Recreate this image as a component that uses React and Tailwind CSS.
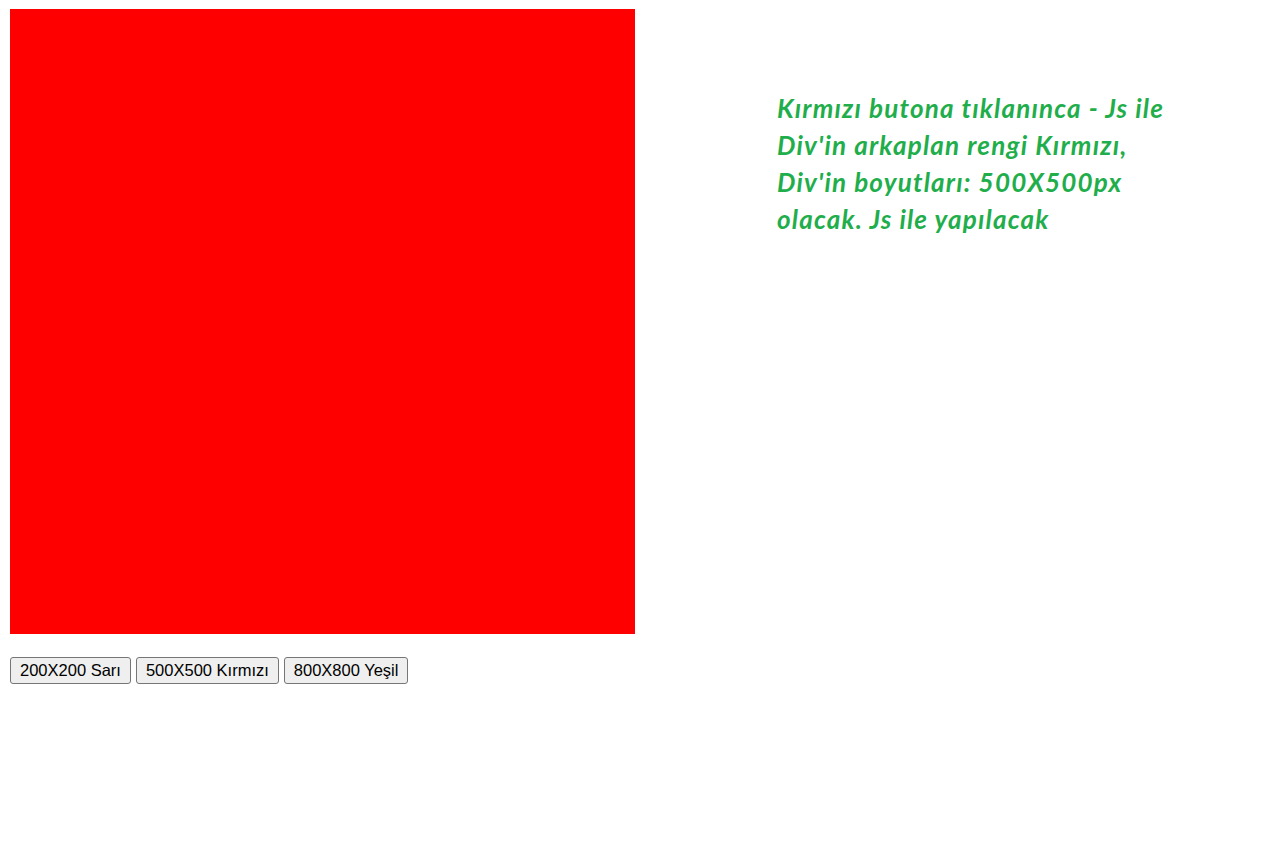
export default function App() {
  const buttons = ["200X200 Sarı", "500X500 Kırmızı", "800X800 Yeşil"];

  return (
    <div className="min-h-screen bg-white pl-[10px] pt-[9px]">
      <div className="flex items-start">
        <div className="flex flex-col">
          <div className="w-[625px] h-[625px] bg-[#ff0000]" />
          <div className="flex gap-[5px] mt-[23px]">
            {buttons.map((label) => (
              <button
                key={label}
                className="h-[27px] px-[9px] bg-[#efefef] border border-[#767676] rounded-[3px] text-[16.5px] leading-none text-black font-['Liberation_Sans',Arial,sans-serif]"
              >
                {label}
              </button>
            ))}
          </div>
        </div>
        <p className="ml-[142px] mt-[81px] text-[26px] leading-[37px] tracking-[1.2px] font-bold italic text-[#1fae4b] font-['Lato','Open_Sans',sans-serif]">
          Kırmızı butona tıklanınca - Js ile
          <br />
          Div'in arkaplan rengi Kırmızı,
          <br />
          Div'in boyutları: 500X500px
          <br />
          olacak. Js ile yapılacak
        </p>
      </div>
    </div>
  );
}
